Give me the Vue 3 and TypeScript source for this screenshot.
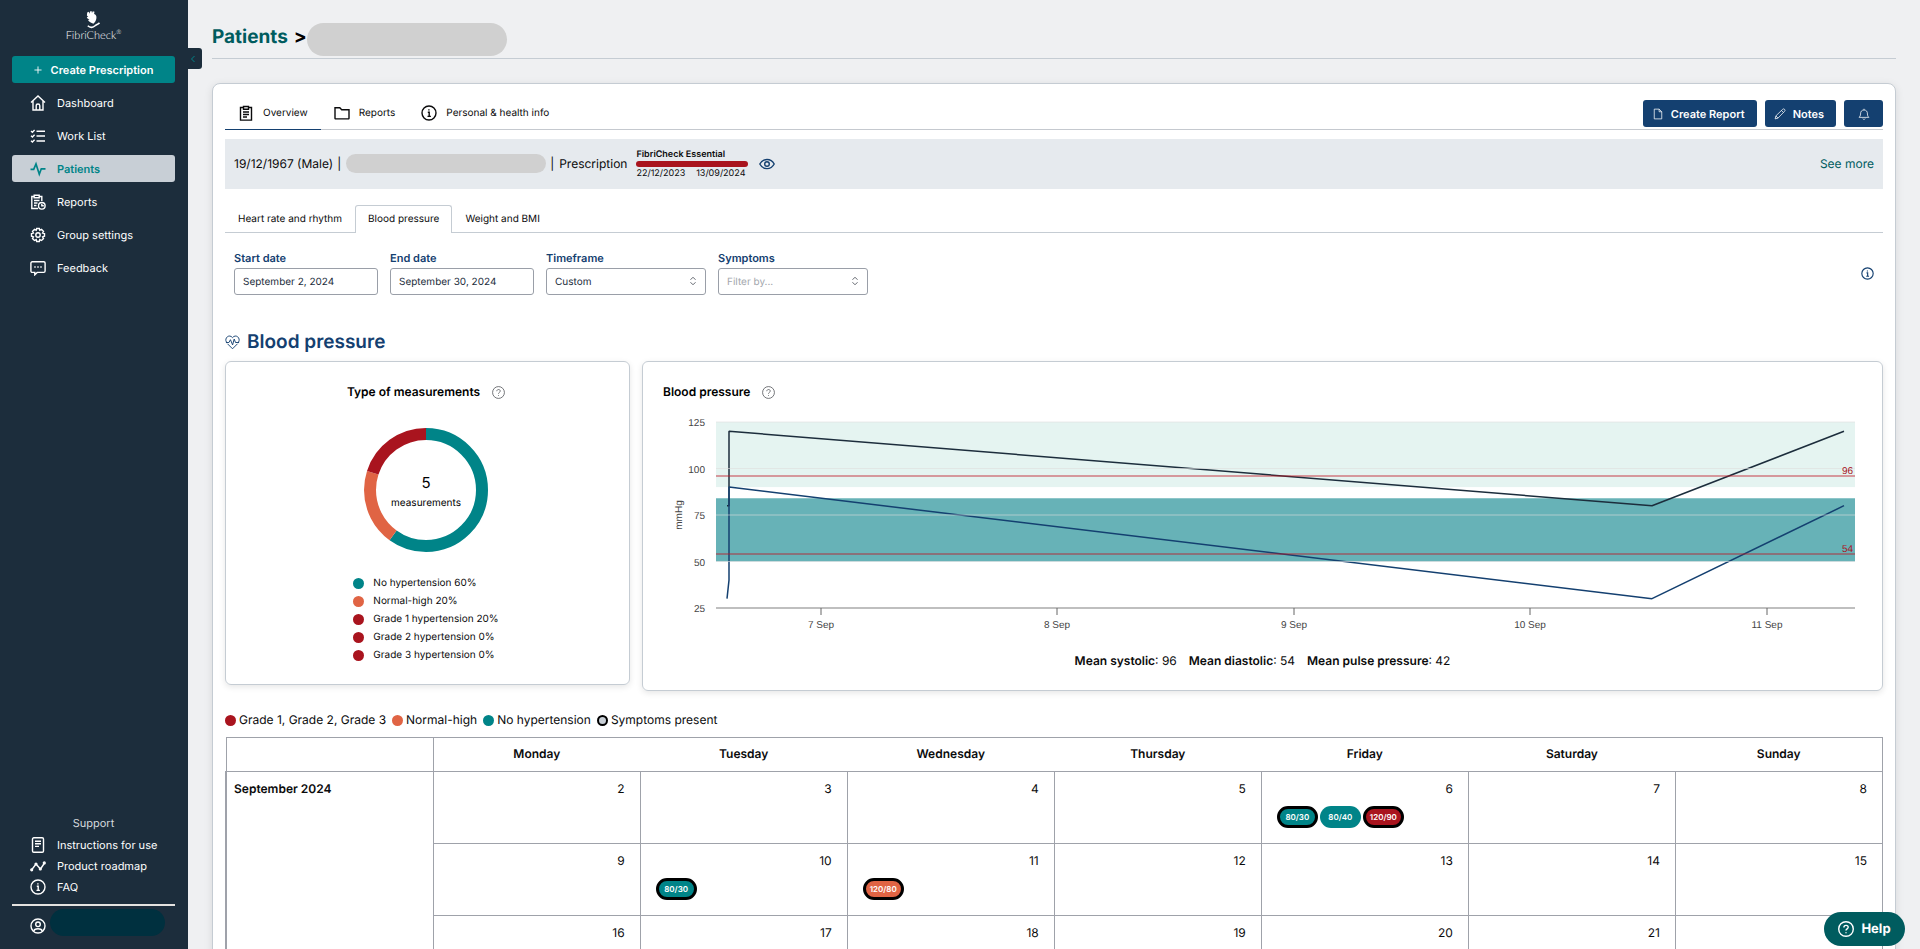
<script setup lang="ts">
interface NavItem {
  label: string
  icon: string
}

interface Reading {
  value: string
  level: 'none' | 'high' | 'grade'
  symptoms: boolean
}

interface Day {
  num: number
  readings: Reading[]
}

const navItems: NavItem[] = [
  { label: 'Dashboard', icon: 'home' },
  { label: 'Work List', icon: 'list' },
  { label: 'Patients', icon: 'pulse' },
  { label: 'Reports', icon: 'report' },
  { label: 'Group settings', icon: 'gear' },
  { label: 'Feedback', icon: 'chat' },
]

const supportItems: NavItem[] = [
  { label: 'Instructions for use', icon: 'doc' },
  { label: 'Product roadmap', icon: 'trend' },
  { label: 'FAQ', icon: 'info' },
]

const typeLegend = [
  { label: 'No hypertension 60%', level: 'none' },
  { label: 'Normal-high 20%', level: 'high' },
  { label: 'Grade 1 hypertension 20%', level: 'grade' },
  { label: 'Grade 2 hypertension 0%', level: 'grade' },
  { label: 'Grade 3 hypertension 0%', level: 'grade' },
]

const calendarLegend = [
  { label: 'Grade 1, Grade 2, Grade 3', level: 'grade' },
  { label: 'Normal-high', level: 'high' },
  { label: 'No hypertension', level: 'none' },
  { label: 'Symptoms present', level: 'symptom' },
]

const weekdays = ['Monday', 'Tuesday', 'Wednesday', 'Thursday', 'Friday', 'Saturday', 'Sunday']

const readings: Record<number, Reading[]> = {
  6: [
    { value: '80/30', level: 'none', symptoms: true },
    { value: '80/40', level: 'none', symptoms: false },
    { value: '120/90', level: 'grade', symptoms: true },
  ],
  10: [{ value: '80/30', level: 'none', symptoms: true }],
  11: [{ value: '120/80', level: 'high', symptoms: true }],
}

const weeks: Day[][] = [2, 9, 16, 23].map((start) =>
  weekdays.map((_, i) => ({ num: start + i, readings: readings[start + i] ?? [] })),
)

/* Chart geometry, in view box units */
const left = 53
const right = 1192
const top = 12
const bottom = 198
const yOf = (v: number): number => bottom - ((v - 25) / 100) * (bottom - top)
const points = (list: [number, number][]): string => list.map(([x, v]) => `${x},${yOf(v)}`).join(' ')
const systolic = points([[64, 80], [66, 80], [66, 120], [989, 80], [1181, 120]])
const diastolic = points([[64, 30], [66, 40], [66, 90], [989, 30], [1181, 80]])
const yTicks = [125, 100, 75, 50, 25]
const xTicks = [
  { x: 158, label: '7 Sep' },
  { x: 394, label: '8 Sep' },
  { x: 631, label: '9 Sep' },
  { x: 867, label: '10 Sep' },
  { x: 1104, label: '11 Sep' },
]
</script>

<template>
  <svg class="sprite" aria-hidden="true">
    <symbol id="i-home" viewBox="0 0 16 16"><path d="M1 7.6 8 1l7 6.6M3 6v9h10V6M6.2 15v-4.2a1.8 1.8 0 0 1 3.6 0V15" /></symbol>
    <symbol id="i-list" viewBox="0 0 16 16"><path d="M6.5 3.2H15M6.5 8H15M6.5 13H15M1 3l1.4 1.2L4.6 2M1 7.8 2.4 9l2.2-2.2M1 12.8 2.4 14l2.2-2.2" /></symbol>
    <symbol id="i-pulse" viewBox="0 0 16 16"><path stroke-width="1.700" d="M.5 8.300h3.200L6 3l3.300 10.200 2-5.400h4.200" /></symbol>
    <symbol id="i-report" viewBox="0 0 16 16"><path d="M8 14.500H1.800v-12H4M9.500 2.500h2.300V7M4.200 1.200h5v2.600h-5zM4 6.500h5.500M4 9h3.500M4 11.500h2.500" /><circle cx="11.800" cy="11.800" r="3.300" /><path d="M11.800 9.800v2h2" /></symbol>
    <symbol id="i-gear" viewBox="0 0 16 16"><path d="M6.700 1h2.600l.5 1.800 1.700-.9 2 2-.9 1.600 1.900.6v2.600l-1.900.6.9 1.700-2 2-1.700-.9-.5 1.900H6.700l-.5-1.900-1.700.9-2-2 .9-1.700L1.500 8.700V6.100l1.900-.6-.9-1.600 2-2 1.700.9z" transform="translate(0 .5)" /><circle cx="8" cy="8" r="2.200" /></symbol>
    <symbol id="i-chat" viewBox="0 0 16 16"><path d="M2.200 1.800h11.600a1.300 1.300 0 0 1 1.300 1.300v8a1.300 1.300 0 0 1-1.300 1.300H7.200L4.800 14.800v-2.400H2.200A1.300 1.300 0 0 1 .9 11.100v-8a1.300 1.300 0 0 1 1.300-1.300zM4.300 7h1.400M7.300 7h1.400M10.300 7h1.400" /></symbol>
    <symbol id="i-doc" viewBox="0 0 16 16"><rect x="2.500" y=".8" width="11" height="14.400" rx="1.300" /><path d="M5 4.200h6M5 6.800h6M5 9.400h4" /></symbol>
    <symbol id="i-trend" viewBox="0 0 16 16"><path d="M1.500 12 6 6l4.500 5L14.500 5" /><circle cx="1.700" cy="11.800" r=".9" /><circle cx="6" cy="6" r=".9" /><circle cx="10.300" cy="11" r=".9" /><circle cx="14.300" cy="4.900" r=".9" /></symbol>
    <symbol id="i-info" viewBox="0 0 16 16"><circle cx="8" cy="8" r="7" /><path d="M6.800 7.300h1.400v4M6.500 11.400h3.400M7.900 4.300v1.200" /></symbol>
    <symbol id="i-user" viewBox="0 0 16 16"><circle cx="8" cy="8" r="7" /><circle cx="8" cy="6.300" r="2.300" /><path d="M3.800 13c.6-3 7.800-3 8.400 0" /></symbol>
    <symbol id="i-clip" viewBox="0 0 16 16"><path d="M5.500 2.500h-3v12.600h11V2.500h-3M5.500 1.500h5v2.800h-5zM5 7h6M5 9.500h6M5 12h4" /></symbol>
    <symbol id="i-folder" viewBox="0 0 16 16"><path d="M1 13.300V2.700h4.800l1.900 2H15v8.600a.6.6 0 0 1-.6.600H1.600a.6.6 0 0 1-.6-.6z" /></symbol>
    <symbol id="i-file" viewBox="0 0 16 16"><path d="M3 1.500h6.500L13 5v9.500H3zM9.500 1.500V5H13" /></symbol>
    <symbol id="i-pencil" viewBox="0 0 16 16"><path d="M1.500 14.500 2.500 10.500 11.500 1.800a1.800 1.800 0 0 1 2.600 2.600L5.300 13.500zM10 3.300l2.600 2.600M2.500 10.500l2.800 3" /></symbol>
    <symbol id="i-bell" viewBox="0 0 16 16"><path d="M1.500 12.500h13c-1.300-1.200-1.900-2.400-1.900-4.500 0-3.600-1.600-5.300-4.600-5.300S3.400 4.400 3.400 8c0 2.100-.6 3.300-1.900 4.500zM6.300 14.200c.6 1.200 2.800 1.200 3.400 0M8 2.700V1" /></symbol>
    <symbol id="i-eye" viewBox="0 0 16 16"><path d="M.8 8C4 1.900 12 1.900 15.200 8 12 14.100 4 14.100.8 8z" /><circle cx="8" cy="8" r="2.300" /></symbol>
    <symbol id="i-help" viewBox="0 0 16 16"><circle cx="8" cy="8" r="7.300" /><path d="M5.900 6.400c0-2.800 4.300-2.700 4.300-.1 0 1.500-2.200 1.600-2.200 3.200M8 11.200v1" /></symbol>
    <symbol id="i-sort" viewBox="0 0 16 16"><path d="M4 6l4-4 4 4M4 10l4 4 4-4" /></symbol>
    <symbol id="i-heart" viewBox="0 0 16 16"><path d="M1.500 7.500C-1 3.200 4.500-1.500 8 2.800 11.500-1.500 17 3.200 14.500 7.500M2.600 9.300 8 14.700l5.400-5.400M1 8h3.200l1.600-3 2.300 5.600 1.700-6.300 1.400 3.700H15" /></symbol>
  </svg>

  <div class="app">
    <aside class="sidebar">
      <div class="logo">
        <svg class="logo-mark" viewBox="0 0 15 18" aria-hidden="true">
          <path d="M1.200 1.600 2.700.8l.8 1.900L4 .4 5.500.1l.5 2L6.800.3l1.700.4-.4 2.200C9.800 3.500 10.800 5 10.400 7.200c-.3 2.200-1.200 4-3 5.500C5.200 12 3 11 2 9l1.500-.6-2-.9L.8 6l1.500-.3L.9 4.600z" />
          <path class="logo-hand" d="M1.800 14.800c2.200 2.200 5.400 1.900 7.200 0 .8-.9 2.600-1.200 4.500-3" />
        </svg>
        <span class="logo-name">FibriCheck<sup>®</sup></span>
      </div>
      <button class="create" type="button">
        <svg class="plus" viewBox="0 0 9 9" aria-hidden="true"><path d="M4.500.5v8M.5 4.500h8" /></svg>
        Create Prescription
      </button>
      <nav class="nav">
        <a v-for="item in navItems" :key="item.label" href="#" class="nav-item" :class="{ active: item.label === 'Patients' }">
          <svg class="icon" aria-hidden="true"><use :href="`#i-${item.icon}`" /></svg>{{ item.label }}
        </a>
      </nav>
      <div class="support">
        <p class="support-title">Support</p>
        <a v-for="item in supportItems" :key="item.label" href="#" class="support-item">
          <svg class="icon" aria-hidden="true"><use :href="`#i-${item.icon}`" /></svg>{{ item.label }}
        </a>
      </div>
      <div class="account">
        <svg class="icon" aria-hidden="true"><use href="#i-user" /></svg>
        <span class="account-name"></span>
      </div>
      <button class="collapse" type="button" aria-label="Collapse menu">
        <svg viewBox="0 0 8 8" aria-hidden="true"><path d="M5.500 1 2.500 4l3 3" /></svg>
      </button>
    </aside>

    <main class="main">
      <header class="crumbs">
        <h1><a href="#">Patients</a><span>&gt;</span></h1>
        <span class="redacted name"></span>
      </header>

      <section class="panel">
        <div class="toolbar">
          <nav class="tabs">
            <a href="#" class="tab current"><svg class="icon" aria-hidden="true"><use href="#i-clip" /></svg>Overview</a>
            <a href="#" class="tab"><svg class="icon" aria-hidden="true"><use href="#i-folder" /></svg>Reports</a>
            <a href="#" class="tab"><svg class="icon" aria-hidden="true"><use href="#i-info" /></svg>Personal &amp; health info</a>
          </nav>
          <div class="actions">
            <button type="button"><svg class="icon thin" aria-hidden="true"><use href="#i-file" /></svg>Create Report</button>
            <button type="button"><svg class="icon thin" aria-hidden="true"><use href="#i-pencil" /></svg>Notes</button>
            <button type="button" class="bell" aria-label="Notifications"><svg class="icon thin" aria-hidden="true"><use href="#i-bell" /></svg></button>
          </div>
        </div>

        <div class="patient">
          <span>19/12/1967 (Male)</span><span class="bar">|</span>
          <span class="redacted id"></span><span class="bar">|</span>
          <span>Prescription</span>
          <div class="plan">
            <strong>FibriCheck Essential</strong>
            <div class="plan-bar"></div>
            <div class="plan-dates"><span>22/12/2023</span><span>13/09/2024</span></div>
          </div>
          <svg class="icon eye" aria-hidden="true"><use href="#i-eye" /></svg>
          <a href="#" class="more">See more</a>
        </div>

        <nav class="subtabs">
          <a href="#">Heart rate and rhythm</a>
          <a href="#" class="current">Blood pressure</a>
          <a href="#">Weight and BMI</a>
        </nav>

        <form class="filters">
          <div class="field date"><label for="start">Start date</label><input id="start" type="text" value="September 2, 2024" /></div>
          <div class="field date"><label for="end">End date</label><input id="end" type="text" value="September 30, 2024" /></div>
          <div class="field frame">
            <label for="frame">Timeframe</label>
            <div class="select"><select id="frame"><option>Custom</option></select><svg class="sort" aria-hidden="true"><use href="#i-sort" /></svg></div>
          </div>
          <div class="field filter">
            <label for="symptoms">Symptoms</label>
            <div class="select"><select id="symptoms" class="empty"><option>Filter by...</option></select><svg class="sort" aria-hidden="true"><use href="#i-sort" /></svg></div>
          </div>
          <svg class="icon hint" aria-hidden="true"><use href="#i-info" /></svg>
        </form>

        <h2><svg class="heart" aria-hidden="true"><use href="#i-heart" /></svg>Blood pressure</h2>

        <div class="cards">
          <article class="card types">
            <h3>Type of measurements<svg class="help-icon" aria-hidden="true"><use href="#i-help" /></svg></h3>
            <svg class="donut" viewBox="0 0 124 124" role="img" aria-label="Type of measurements">
              <g transform="rotate(-90 62 62)">
                <circle class="ring none" cx="62" cy="62" r="56" pathLength="100" stroke-dasharray="60 40" />
                <circle class="ring high" cx="62" cy="62" r="56" pathLength="100" stroke-dasharray="20 80" stroke-dashoffset="-60" />
                <circle class="ring grade" cx="62" cy="62" r="56" pathLength="100" stroke-dasharray="20 80" stroke-dashoffset="-80" />
              </g>
              <text class="total" x="62" y="60">5</text>
              <text class="unit" x="62" y="78">measurements</text>
            </svg>
            <ul class="type-legend">
              <li v-for="entry in typeLegend" :key="entry.label"><span class="dot" :class="entry.level"></span>{{ entry.label }}</li>
            </ul>
          </article>

          <article class="card trend">
            <h3>Blood pressure<svg class="help-icon" aria-hidden="true"><use href="#i-help" /></svg></h3>
            <svg class="chart" viewBox="0 0 1199 224" role="img" aria-label="Blood pressure over time">
              <rect class="band-sys" :x="left" :y="yOf(125)" :width="right - left" :height="yOf(90) - yOf(125)" />
              <rect class="band-dia" :x="left" :y="yOf(84)" :width="right - left" :height="yOf(50) - yOf(84)" />
              <polyline class="sys" :points="systolic" />
              <polyline class="dia" :points="diastolic" />
              <g v-for="v in yTicks" :key="v">
                <line class="grid" :class="{ axis: v === 25 }" :x1="left" :x2="right" :y1="yOf(v)" :y2="yOf(v)" />
                <text class="tick end" x="42" :y="yOf(v) + 4">{{ v }}</text>
              </g>
              <g v-for="t in xTicks" :key="t.label">
                <line class="mark" :x1="t.x" :x2="t.x" :y1="bottom" :y2="bottom + 7" />
                <text class="tick mid" :x="t.x" y="218">{{ t.label }}</text>
              </g>
              <g v-for="m in [96, 54]" :key="m">
                <line class="mean" :x1="left" :x2="right" :y1="yOf(m)" :y2="yOf(m)" />
                <text class="mean-label" x="1190" :y="yOf(m) - 2">{{ m }}</text>
              </g>
              <text class="tick unit-label" transform="translate(19 105) rotate(-90)">mmHg</text>
            </svg>
            <p class="means">
              <span><strong>Mean systolic</strong>: 96</span>
              <span><strong>Mean diastolic</strong>: 54</span>
              <span><strong>Mean pulse pressure</strong>: 42</span>
            </p>
          </article>
        </div>

        <ul class="legend">
          <li v-for="entry in calendarLegend" :key="entry.label"><span class="dot" :class="entry.level"></span>{{ entry.label }}</li>
        </ul>

        <table class="calendar">
          <thead>
            <tr><th></th><th v-for="d in weekdays" :key="d" scope="col">{{ d }}</th></tr>
          </thead>
          <tbody>
            <tr v-for="(week, i) in weeks" :key="i">
              <th v-if="i === 0" class="month" scope="rowgroup" :rowspan="weeks.length">September 2024</th>
              <td v-for="day in week" :key="day.num">
                <div class="num">{{ day.num }}</div>
                <div v-if="day.readings.length" class="readings">
                  <button v-for="r in day.readings" :key="r.value" type="button" class="reading" :class="[r.level, { symptoms: r.symptoms }]">{{ r.value }}</button>
                </div>
              </td>
            </tr>
          </tbody>
        </table>
      </section>
    </main>

    <button class="help" type="button"><svg class="icon" aria-hidden="true"><use href="#i-help" /></svg>Help</button>
  </div>
</template>

<style>
body {
  background: #eff0f2;
  overflow: hidden;
}
</style>

<style scoped>
* {
  box-sizing: border-box;
}
.sprite {
  position: absolute;
  width: 0;
  height: 0;
}
.app {
  display: flex;
  height: 100vh;
  overflow: hidden;
  font-family: Inter, "Liberation Sans", sans-serif;
  font-size: 10px;
  text-rendering: geometricPrecision;
  color: #0b0b0c;
}
a {
  color: inherit;
  text-decoration: none;
}
button {
  border: 0;
  font: inherit;
  text-rendering: inherit;
  cursor: pointer;
}
h1, h2, h3, p, ul {
  margin: 0;
  padding: 0;
}
ul {
  list-style: none;
}
.icon {
  width: 16px;
  height: 16px;
  flex: none;
  fill: none;
  stroke: currentColor;
  stroke-width: 1.4;
}
.thin {
  width: 12px;
  height: 12px;
  stroke-width: 1;
}

.sidebar {
  position: relative;
  display: flex;
  flex-direction: column;
  width: 188px;
  flex: none;
  padding: 11px 13px 13px 12px;
  background: #1c2d3c;
  color: #fff;
}
.logo {
  display: flex;
  flex-direction: column;
  align-items: center;
  height: 45px;
}
.logo-mark {
  width: 15px;
  height: 18px;
  fill: #fff;
}
.logo-hand {
  fill: none;
  stroke: #fff;
  stroke-width: 1.6;
}
.logo-name {
  font-family: Lato, sans-serif;
  font-size: 11px;
  font-weight: 300;
  line-height: 14px;
}
.logo-name sup {
  font-size: 6px;
  line-height: 6px;
}
.create {
  display: flex;
  align-items: center;
  justify-content: center;
  gap: 9px;
  height: 27px;
  flex: none;
  padding: 0;
  border-radius: 3px;
  background: #008488;
  color: #fff;
  font-size: 11px;
  font-weight: 600;
}
.plus {
  width: 8px;
  height: 8px;
  stroke: #fff;
  stroke-width: 1;
}
.nav {
  display: flex;
  flex-direction: column;
  gap: 6px;
  margin-top: 6px;
}
.nav-item {
  display: flex;
  align-items: center;
  gap: 11px;
  height: 27px;
  padding-left: 18px;
  border-radius: 3px;
  font-size: 11px;
}
.nav-item.active {
  background: #c8cfd6;
  color: #008488;
  font-weight: 600;
}
.support {
  margin-top: auto;
  padding-bottom: 7px;
  border-bottom: 2px solid #e4e2e0;
}
.support-title {
  text-align: center;
  font-size: 11px;
  line-height: 15px;
  margin-bottom: 3px;
  color: #d5dade;
}
.support-item {
  display: flex;
  align-items: center;
  gap: 11px;
  height: 21px;
  padding-left: 18px;
  font-size: 11px;
}
.account {
  display: flex;
  align-items: center;
  gap: 4px;
  padding: 3px 10px 0 18px;
}
.account .icon {
  margin-top: 6px;
}
.account-name {
  flex: 1;
  height: 27px;
  border-radius: 14px;
  background: #00303f;
}
.collapse {
  position: absolute;
  left: 188px;
  top: 48px;
  width: 14px;
  height: 21px;
  padding: 0;
  border-radius: 0 3px 3px 0;
  background: #1c2d3c;
}
.collapse svg {
  display: block;
  width: 8px;
  height: 8px;
  margin-left: 1px;
  fill: none;
  stroke: #008488;
}

.main {
  flex: 1;
  min-width: 0;
  padding: 23px 24px 0;
  background: #eff0f2;
}
.crumbs {
  display: flex;
  height: 36px;
  border-bottom: 1px solid #c5ccd3;
}
.crumbs h1 {
  display: flex;
  gap: 6px;
  font-size: 19px;
  line-height: 28px;
  font-weight: 700;
  color: #000;
}
.crumbs a {
  color: #005c5f;
}
.redacted {
  background: #d0d0d0;
}
.name {
  width: 200px;
  height: 33px;
  border-radius: 17px;
}
.panel {
  margin-top: 24px;
  padding: 16px 12px;
  border: 1px solid #c5ccd3;
  border-radius: 8px;
  background: #fff;
  box-shadow: 0 2px 8px #0000001a;
}
.toolbar {
  display: flex;
  align-items: stretch;
  justify-content: space-between;
  height: 30px;
  border-bottom: 1px solid #c5c9cf;
}
.tabs {
  display: flex;
}
.tab {
  display: flex;
  align-items: center;
  gap: 9px;
  height: 30px;
  padding: 0 13px 4px 13px;
}
.tab.current {
  border-bottom: 1px solid #144070;
}
.actions {
  display: flex;
  gap: 8px;
}
.actions button {
  display: flex;
  align-items: center;
  justify-content: center;
  gap: 7px;
  height: 27px;
  padding: 0 12px 0 9px;
  border-radius: 3px;
  background: #144070;
  color: #fff;
  font-size: 11px;
  font-weight: 600;
}
.actions .bell {
  width: 39px;
  padding: 0;
}
.patient {
  display: flex;
  align-items: center;
  height: 50px;
  margin-top: 9px;
  padding: 0 9px 1px;
  background: #e6eaee;
  font-size: 12px;
}
.bar {
  margin: 0 5px 0 4px;
}
.id {
  width: 200px;
  height: 19px;
  border-radius: 10px;
}
.plan {
  width: 112px;
  margin: 0 11px 0 9px;
  font-size: 9px;
  line-height: 11px;
}
.plan strong {
  display: block;
  font-weight: 600;
}
.plan-bar {
  height: 6px;
  margin: 1px 0;
  border-radius: 3px;
  background: #a9141e;
}
.plan-dates {
  display: flex;
  justify-content: space-between;
  padding-right: 3px;
}
.eye {
  color: #144070;
}
.more {
  margin-left: auto;
  color: #005c5f;
}
.subtabs {
  display: flex;
  margin-top: 16px;
  box-shadow: inset 0 -1px #c5ccd3;
}
.subtabs a {
  height: 28px;
  padding: 0 12px;
  border: 1px solid transparent;
  border-bottom: 0;
  line-height: 27px;
}
.subtabs .current {
  border-color: #c5ccd3;
  border-radius: 3px 3px 0 0;
  background: #fff;
}
.filters {
  display: flex;
  align-items: center;
  gap: 12px;
  padding: 18px 9px 0;
}
.field label {
  display: block;
  margin-bottom: 2px;
  font-size: 11px;
  line-height: 15px;
  font-weight: 600;
  color: #144070;
}
.field input,
.field select {
  display: block;
  width: 100%;
  height: 27px;
  padding: 0 8px;
  border: 1px solid #9a9fa8;
  border-radius: 3px;
  background: #fff;
  color: #1c2d3c;
  font: inherit;
  text-rendering: inherit;
  appearance: none;
}
.field .empty {
  color: #a3a7ad;
}
.date {
  width: 144px;
}
.frame {
  width: 160px;
}
.filter {
  width: 150px;
}
.select {
  position: relative;
}
.sort {
  position: absolute;
  right: 8px;
  top: 8px;
  width: 10px;
  height: 10px;
  fill: none;
  stroke: #555b63;
  stroke-width: 1.5;
}
.hint {
  width: 13px;
  height: 13px;
  margin-left: auto;
  color: #144070;
}
h2 {
  display: flex;
  align-items: center;
  gap: 7px;
  margin-top: 35px;
  font-size: 19px;
  line-height: 24px;
  font-weight: 600;
  color: #144070;
}
.heart {
  width: 15px;
  height: 15px;
  fill: none;
  stroke: currentColor;
}
.cards {
  display: grid;
  grid-template-columns: 405fr 1241fr;
  gap: 12px;
  align-items: start;
  margin-top: 7px;
}
.card {
  border: 1px solid #c5ccd3;
  border-radius: 6px;
  box-shadow: 0 2px 6px #0000001a;
}
.card h3 {
  display: flex;
  align-items: center;
  gap: 12px;
  font-size: 12px;
  line-height: 18px;
  font-weight: 600;
  color: #000;
}
.help-icon {
  width: 13px;
  height: 13px;
  fill: none;
  stroke: #55585c;
  stroke-width: 1;
}
.types {
  display: flex;
  flex-direction: column;
  align-items: center;
  padding: 21px 3px 20px 0;
}
.donut {
  width: 124px;
  height: 124px;
  margin-top: 27px;
}
.ring {
  fill: none;
  stroke-width: 12;
}
.ring.none {
  stroke: #008488;
}
.ring.high {
  stroke: #e06444;
}
.ring.grade {
  stroke: #a9141e;
}
.donut text {
  text-anchor: middle;
}
.total {
  font-size: 15px;
}
.unit {
  font-size: 10px;
}
.type-legend {
  margin-top: 22px;
}
.type-legend li {
  display: flex;
  align-items: center;
  gap: 9px;
  line-height: 18px;
}
.dot {
  width: 11px;
  height: 11px;
  border-radius: 50%;
}
.none {
  background: #008488;
}
.high {
  background: #e06444;
}
.grade {
  background: #a9141e;
}
.dot.symptom {
  border: 2px solid #000;
  background: #c8cfd6;
}
.trend {
  padding: 21px 20px 20px;
}
.chart {
  display: block;
  width: 100%;
  margin-top: 9px;
}
.band-sys {
  fill: #e5f4f1;
}
.band-dia {
  fill: #67b2b7;
}
.chart polyline {
  fill: none;
  stroke-width: 1.5;
  stroke-linejoin: bevel;
}
.chart .sys {
  stroke: #1c2d3c;
}
.chart .dia {
  stroke: #144070;
}
.grid {
  stroke: #dddddd;
  stroke-opacity: 0.6;
}
.grid.axis {
  stroke: #aaa;
  stroke-opacity: 1;
  stroke-width: 1.5;
}
.mark {
  stroke: #666;
}
.tick {
  font-family: "Liberation Sans", sans-serif;
  font-size: 10px;
  fill: #444;
}
.end {
  text-anchor: end;
}
.mid,
.unit-label {
  text-anchor: middle;
}
.mean {
  stroke: #c01622;
  stroke-opacity: 0.55;
  stroke-width: 1.5;
}
.mean-label {
  font-family: "Liberation Sans", sans-serif;
  font-size: 10px;
  fill: #a9141e;
  text-anchor: end;
}
.means {
  display: flex;
  justify-content: center;
  gap: 12px;
  margin-top: 18px;
  font-size: 12px;
  line-height: 18px;
}
.means strong {
  font-weight: 600;
}
.legend {
  display: flex;
  gap: 6px;
  margin-top: 20px;
  font-size: 12px;
  line-height: 18px;
}
.legend li {
  display: flex;
  align-items: center;
  gap: 3px;
}
.calendar {
  width: 100%;
  margin-top: 8px;
  border-collapse: collapse;
  table-layout: fixed;
  border: 1px solid #9fa2aa;
  font-size: 12px;
}
.calendar th {
  font-weight: 600;
}
.calendar thead th {
  height: 34px;
  padding: 0 0 2px;
  border-bottom: 1px solid #9fa2aa;
}
.calendar thead th:first-child {
  border-right: 1px solid #9fa2aa;
}
.calendar td {
  height: 72px;
  padding: 8px 15px 0;
  border: 1px solid #9fa2aa;
  vertical-align: top;
}
.calendar .month {
  padding: 8px 7px;
  border-left: 2px solid #9fa2aa;
  vertical-align: top;
  text-align: left;
  line-height: 18px;
}
.num {
  text-align: right;
  line-height: 18px;
}
.readings {
  display: flex;
  gap: 2px;
  margin-top: 8px;
}
.reading {
  width: 41px;
  height: 22px;
  padding: 0;
  border-radius: 11px;
  color: #fff;
  font-size: 8px;
  font-weight: 600;
}
.reading.symptoms {
  border: 3px solid #000;
}
.help {
  position: fixed;
  right: 15px;
  bottom: 3px;
  display: flex;
  align-items: center;
  justify-content: center;
  gap: 7px;
  width: 81px;
  height: 34px;
  padding: 0;
  border-radius: 17px;
  background: #005c5f;
  color: #fff;
  font-size: 13px;
  font-weight: 700;
}
</style>
